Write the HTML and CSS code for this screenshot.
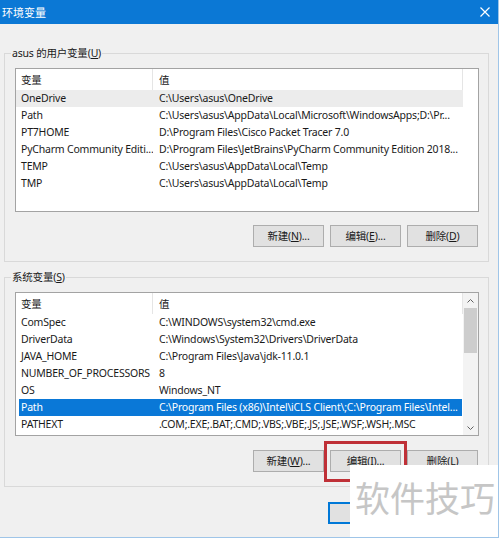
FILE: index.html
```html
<!DOCTYPE html>
<html lang="zh-CN">
<head>
<meta charset="utf-8">
<title>环境变量</title>
<link rel="stylesheet" href="styles.css">
</head>
<body>
<div class="window">
  <div class="titlebar">
    <span class="title">环境变量</span>
    <svg class="close" width="10" height="10" viewBox="0 0 10 10"><path d="M0.5 0.5L9.5 9.5M9.5 0.5L0.5 9.5" stroke="#fff" stroke-width="1.2" fill="none"/></svg>
  </div>
  <div class="content">
    <div class="group">
      <div class="legend"><span>asus 的用户变量(<u>U</u>)</span></div>
      <div class="list">
        <div class="lv-body">
          <div class="lv-header"><div class="c1">变量</div><div class="c2">值</div></div>
          <div class="row hover"><div class="c1">OneDrive</div><div class="c2">C:\Users\asus\OneDrive</div></div>
          <div class="row"><div class="c1">Path</div><div class="c2">C:\Users\asus\AppData\Local\Microsoft\WindowsApps;D:\Pr...</div></div>
          <div class="row"><div class="c1">PT7HOME</div><div class="c2">D:\Program Files\Cisco Packet Tracer 7.0</div></div>
          <div class="row"><div class="c1">PyCharm Community Editi...</div><div class="c2">D:\Program Files\JetBrains\PyCharm Community Edition 2018...</div></div>
          <div class="row"><div class="c1">TEMP</div><div class="c2">C:\Users\asus\AppData\Local\Temp</div></div>
          <div class="row"><div class="c1">TMP</div><div class="c2">C:\Users\asus\AppData\Local\Temp</div></div>
        </div>
      </div>
      <div class="buttons">
        <div class="btn">新建(<u>N</u>)...</div>
        <div class="btn">编辑(<u>E</u>)...</div>
        <div class="btn">删除(<u>D</u>)</div>
      </div>
    </div>

    <div class="group g2">
      <div class="legend"><span>系统变量(<u>S</u>)</span></div>
      <div class="list">
        <div class="lv-body">
          <div class="lv-header"><div class="c1">变量</div><div class="c2">值</div></div>
          <div class="row"><div class="c1">ComSpec</div><div class="c2">C:\WINDOWS\system32\cmd.exe</div></div>
          <div class="row"><div class="c1">DriverData</div><div class="c2">C:\Windows\System32\Drivers\DriverData</div></div>
          <div class="row"><div class="c1">JAVA_HOME</div><div class="c2">C:\Program Files\Java\jdk-11.0.1</div></div>
          <div class="row"><div class="c1">NUMBER_OF_PROCESSORS</div><div class="c2">8</div></div>
          <div class="row"><div class="c1">OS</div><div class="c2">Windows_NT</div></div>
          <div class="row sel"><div class="c1">Path</div><div class="c2">C:\Program Files (x86)\Intel\iCLS Client\;C:\Program Files\Intel...</div></div>
          <div class="row"><div class="c1">PATHEXT</div><div class="c2">.COM;.EXE;.BAT;.CMD;.VBS;.VBE;.JS;.JSE;.WSF;.WSH;.MSC</div></div>
        </div>
        <div class="scrollbar">
          <div class="arrow"><svg width="7" height="4" viewBox="0 0 7 4"><path d="M0.5 3.5L3.5 0.5L6.5 3.5" stroke="#606060" stroke-width="1" fill="none"/></svg></div>
          <div class="track"><div class="thumb"></div></div>
          <div class="arrow"><svg width="7" height="4" viewBox="0 0 7 4"><path d="M0.5 0.5L3.5 3.5L6.5 0.5" stroke="#606060" stroke-width="1" fill="none"/></svg></div>
        </div>
      </div>
      <div class="buttons">
        <div class="btn">新建(<u>W</u>)...</div>
        <div class="btn">编辑(<u>I</u>)...</div>
        <div class="btn">删除(<u>L</u>)</div>
      </div>
    </div>

    <div class="footer">
      <div class="btn default"></div>
      <div class="btn"></div>
    </div>
  </div>
  <div class="redbox"></div>
  <div class="watermark">软件技巧</div>
</div>
</body>
</html>
```
FILE: styles.css
```css
html, body {
  margin: 0;
  padding: 0;
  background: #ffffff;
}
body {
  font-family: "Noto Sans", "Noto Sans CJK SC", sans-serif;
  font-size: 10.5px;
  letter-spacing: -0.2px;
  color: #1a1a1a;
}
.window {
  position: relative;
  width: 499px;
  height: 538px;
  box-sizing: border-box;
  background: #f0f0f0;
  border-right: 1px solid #9fc5e8;
  border-bottom: 1px solid #9fc5e8;
  overflow: hidden;
}
.titlebar {
  height: 24px;
  background: #0b78d5;
  display: flex;
  align-items: center;
  justify-content: space-between;
  padding: 0 8px 0 2px;
  color: #fff;
}
.title {
  font-family: "Noto Sans CJK SC", sans-serif;
  font-size: 11px;
  letter-spacing: 0;
  line-height: 24px;
}
.close {
  display: block;
}
.content {
  padding: 29px 0 0 4px;
}
.group {
  width: 485px;
  box-sizing: border-box;
  border: 1px solid #d9d9d9;
  padding: 0 10px 14px 10px;
}
.g2 {
  margin-top: 15px;
}
.legend {
  height: 14px;
  line-height: 14px;
  margin-top: -8px;
}
.legend span {
  background: #f0f0f0;
  padding: 0 1px;
  margin-left: -4px;
}
.list {
  margin-top: 8px;
  width: 464px;
  height: 144px;
  box-sizing: border-box;
  border: 1px solid #a3a3a3;
  background: #fff;
  display: flex;
  overflow: hidden;
}
.lv-body {
  width: 447px;
  flex: none;
}
.lv-header {
  height: 21px;
  line-height: 22px;
  display: flex;
  border-right: 1px solid #e5e5e5;
  box-sizing: border-box;
}
.lv-header .c1 {
  border-right: 1px solid #e5e5e5;
  box-sizing: border-box;
}
.row {
  height: 17px;
  line-height: 17px;
  display: flex;
}
.c1 {
  width: 137px;
  padding-left: 5px;
  box-sizing: border-box;
  white-space: nowrap;
  overflow: hidden;
  flex: none;
}
.c2 {
  flex: 1;
  padding-left: 6px;
  white-space: nowrap;
  overflow: hidden;
}
.row.hover {
  background: #ececec;
}
.row.sel {
  background: #0a78d7;
  color: #fff;
  margin-left: 3px;
  width: 443px;
}
.row.sel .c1 {
  width: 134px;
  padding-left: 2px;
}
.scrollbar {
  width: 15px;
  display: flex;
  flex-direction: column;
  background: #f3f3f3;
}
.arrow {
  height: 15px;
  display: flex;
  align-items: center;
  justify-content: center;
  flex: none;
}
.track {
  flex: 1;
}
.thumb {
  height: 45px;
  margin: 0 1px;
  background: #cdcdcd;
}
.buttons {
  margin-top: 13px;
  display: flex;
  justify-content: flex-end;
  gap: 6px;
}
.g2 .buttons {
  margin-top: 14px;
}
.btn {
  width: 71px;
  height: 22px;
  box-sizing: border-box;
  border: 1px solid #adadad;
  background: #e1e1e1;
  text-align: center;
  line-height: 20px;
  white-space: nowrap;
}
.footer {
  margin-top: 15px;
  width: 485px;
  box-sizing: border-box;
  padding-right: 10px;
  display: flex;
  justify-content: flex-end;
  gap: 9px;
}
.btn.default {
  border: 1px solid #0078d7;
  box-shadow: inset 0 0 0 1px #0078d7;
}
.redbox {
  position: absolute;
  left: 324px;
  top: 441px;
  width: 83px;
  height: 41px;
  box-sizing: border-box;
  border: 3px solid #bf3037;
}
.watermark {
  position: absolute;
  left: 350px;
  top: 465px;
  width: 150px;
  height: 75px;
  background: #ffffff;
  font-family: "Noto Sans CJK SC", sans-serif;
  font-size: 35px;
  letter-spacing: 0;
  line-height: 64px;
  color: #c6c6c6;
  padding-left: 5px;
  box-sizing: border-box;
  white-space: nowrap;
}
```
